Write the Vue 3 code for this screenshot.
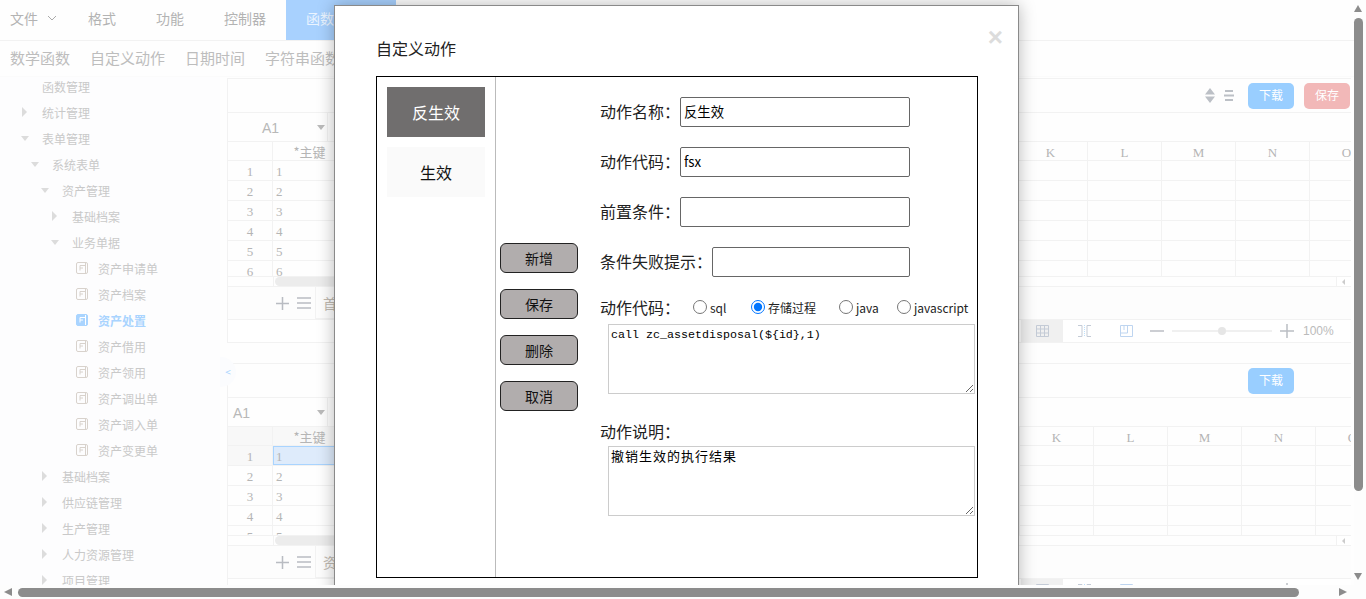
<script setup>
const tree = [
  { t: '函数管理', l: 0, k: 'none' }, { t: '统计管理', l: 0, k: 'closed' }, { t: '表单管理', l: 0, k: 'open' },
  { t: '系统表单', l: 1, k: 'open' }, { t: '资产管理', l: 2, k: 'open' }, { t: '基础档案', l: 3, k: 'closed' },
  { t: '业务单据', l: 3, k: 'open' }, { t: '资产申请单', l: 4, k: 'leaf' }, { t: '资产档案', l: 4, k: 'leaf' },
  { t: '资产处置', l: 4, k: 'leaf', on: true }, { t: '资产借用', l: 4, k: 'leaf' }, { t: '资产领用', l: 4, k: 'leaf' },
  { t: '资产调出单', l: 4, k: 'leaf' }, { t: '资产调入单', l: 4, k: 'leaf' }, { t: '资产变更单', l: 4, k: 'leaf' },
  { t: '基础档案', l: 2, k: 'closed' }, { t: '供应链管理', l: 2, k: 'closed' }, { t: '生产管理', l: 2, k: 'closed' },
  { t: '人力资源管理', l: 2, k: 'closed' }, { t: '项目管理', l: 2, k: 'closed' },
]
const cols = 'BCDEFGHIJKLMNO'.split('')
const panels = [
  { id: 1, save: true, nameLeft: false, tab: '首', colB: 75, rows: [1, 2, 3, 4, 5, 6], sel: false, gridH: 134, gap: 20 },
  { id: 2, save: false, nameLeft: true, tab: '资', colB: 81, rows: [1, 2, 3, 4, 5, 6], sel: true, gridH: 108, gap: 0 },
]
</script>

<template>
  <div class="window">
    <main class="page">
      <nav class="tabs">
        <a class="tab file">文件<svg class="chev" width="10" height="6" viewBox="0 0 10 6"><path d="M1 1l4 4 4-4" fill="none" stroke="#aaa"/></svg></a>
        <a class="tab">格式</a><a class="tab">功能</a><a class="tab">控制器</a>
        <a class="tab active">函数</a>
      </nav>
      <nav class="subtabs">
        <a>数学函数</a><a>自定义动作</a><a>日期时间</a><a>字符串函数</a>
      </nav>
      <div class="body">
        <aside class="sidebar">
          <div v-for="(n, i) in tree" :key="i" class="node" :class="{ on: n.on }" :style="{ paddingLeft: 22 + n.l * 10 + 'px' }">
            <i class="mark" :class="n.k"></i>
            <svg v-if="n.k === 'leaf'" class="leaf-ico" width="13" height="13" viewBox="0 0 13 13">
              <rect x=".5" y=".5" width="11" height="11" rx="1.5" :fill="n.on ? '#a9d4ff' : 'none'" :stroke="n.on ? '#a9d4ff' : '#d8d2cc'"/>
              <path d="M4 3.5h5M4 3.5v5M4 6h3M9.5 1v10" fill="none" :stroke="n.on ? '#fff' : '#d8d2cc'"/>
            </svg>
            <span>{{ n.t }}</span>
          </div>
        </aside>
        <section class="content">
          <button class="collapse">&lt;</button>
          <div v-for="p in panels" :key="p.id" class="panel" :style="{ marginBottom: p.gap + 'px' }">
            <div class="toolbar">
              <svg v-if="p.save" class="tool sort" width="10" height="15" viewBox="0 0 10 15"><path d="M5 0l5 6.500H0zM5 15l5-6.500H0z" fill="#bcc0c6"/></svg>
              <svg v-if="p.save" class="tool lines" width="10" height="11" viewBox="0 0 10 11"><path d="M1 1h8M0 5.500h10M1 10h8" stroke="#bcc0c6" stroke-width="2"/></svg>
              <button class="btn blue">下载</button>
              <button class="btn" :class="p.save ? 'red' : 'ghost'">{{ p.save ? '保存' : '' }}</button>
            </div>
            <div class="formula">
              <div class="cellname" :class="{ left: p.nameLeft }"><span>A1</span><i class="caret"></i></div>
            </div>
            <div class="grid" :style="{ height: p.gridH + 'px' }">
              <div class="row head">
                <div class="c idx" :class="{ shade: p.sel }"></div>
                <div class="c a" :class="{ shade: p.sel }">*主键</div>
                <div v-for="(c, ci) in cols" :key="c" class="c" :style="{ flexBasis: (ci === 0 ? p.colB : 74) + 'px' }">{{ c }}</div>
              </div>
              <div v-for="r in p.rows" :key="r" class="row">
                <div class="c idx" :class="{ shade: p.sel && r === 1 }">{{ r }}</div>
                <div class="c a val" :class="{ selected: p.sel && r === 1 }">{{ r }}</div>
                <div v-for="(c, ci) in cols" :key="c" class="c" :style="{ flexBasis: (ci === 0 ? p.colB : 74) + 'px' }"></div>
              </div>
            </div>
            <div class="hscroll">
              <div class="hs-spacer"></div><div class="hs-thumb"></div><div class="hs-arrow"><i></i></div>
            </div>
            <div class="sheets">
              <svg class="sheet-ico" width="13" height="13" viewBox="0 0 13 13"><path d="M0 6.500h13M6.500 0v13" stroke="#b9bcc2" stroke-width="1.500"/></svg>
              <svg class="sheet-ico" width="14" height="12" viewBox="0 0 14 12"><path d="M0 1h14M0 6h14M0 11h14" stroke="#b9bcc2" stroke-width="1.500"/></svg>
              <div class="sheet">{{ p.tab }}</div>
            </div>
            <div class="status">
              <div class="view cur"><svg width="13" height="12" viewBox="0 0 13 12"><path d="M.5.500h12v11H.5zM.5 4h12M.5 8h12M4.500.500v11M8.500.500v11" fill="none" stroke="#c4cbd6"/></svg></div>
              <div class="view"><svg width="13" height="12" viewBox="0 0 13 12"><path d="M0 .500h4v11H0M13 .500H9v11h4" fill="none" stroke="#c4cbd6"/><path d="M6.500 0v12" stroke="#bde0fb" stroke-dasharray="1 1"/></svg></div>
              <div class="view"><svg width="13" height="12" viewBox="0 0 13 12"><path d="M.5.500h12v11H.5zM.5 8h7V.500M4 .500V5" fill="none" stroke="#bed5f0"/></svg></div>
              <svg class="zm minus" width="14" height="2" viewBox="0 0 14 2"><path d="M0 1h14" stroke="#bbbec4" stroke-width="1.500"/></svg>
              <div class="slider"><i></i></div>
              <svg class="zm plus" width="14" height="14" viewBox="0 0 14 14"><path d="M0 7h14M7 0v14" stroke="#bbbec4" stroke-width="1.500"/></svg>
              <span class="pct">100%</span>
            </div>
          </div>
        </section>
      </div>

      <div class="modal">
        <span class="close">×</span>
        <h3 class="title">自定义动作</h3>
        <div class="box">
          <div class="actions">
            <div class="action cur">反生效</div>
            <div class="action">生效</div>
          </div>
          <div class="ops">
            <button>新增</button><button>保存</button><button>删除</button><button>取消</button>
          </div>
          <form class="form">
            <div class="field"><label>动作名称：</label><input value="反生效" /></div>
            <div class="field"><label>动作代码：</label><input value="fsx" /></div>
            <div class="field"><label>前置条件：</label><input value="" /></div>
            <div class="field"><label>条件失败提示：</label><input value="" /></div>
            <div class="types">
              <label class="lab">动作代码：</label>
              <div class="radios">
                <label><input type="radio" name="t" />sql</label>
                <label><input type="radio" name="t" checked />存储过程</label>
                <label><input type="radio" name="t" />java</label>
                <label><input type="radio" name="t" />javascript</label>
              </div>
            </div>
            <textarea class="code latin">call zc_assetdisposal(${id},1)</textarea>
            <label class="desc">动作说明：</label>
            <textarea class="code cjk">撤销生效的执行结果</textarea>
          </form>
        </div>
      </div>
    </main>

    <div class="vbar">
      <i class="arr up"></i><div class="vthumb"></div><i class="arr down"></i>
    </div>
    <div class="hbar">
      <i class="arr left"></i><div class="hthumb"></div><i class="arr right"></i>
    </div>
  </div>
</template>

<style>
html, body { margin: 0; overflow: hidden; background: #fff; }
</style>

<style scoped>
.window {
  display: grid;
  grid-template-columns: 1fr 12px;
  grid-template-rows: 585px 14px;
  height: 599px;
  width: 1366px;
  font-family: "Noto Sans CJK SC", "Noto Sans", sans-serif;
  background: #fefefe;
}
.page { position: relative; overflow: hidden; grid-column: 1; grid-row: 1; }

.tabs { display: flex; height: 40px; border-bottom: 1px solid #f2f2f2; font-size: 14px; color: #b3b3b3; }
.tab { line-height: 36px; padding: 0 20px; }
.tab.file { padding: 0 0 0 10px; width: 58px; display: flex; align-items: center; gap: 9px; height: 36px; }
.tab.active { background: #a8d1fe; color: #eaf4ff; width: 70px; padding: 0 20px; height: 40px; }

.subtabs { display: flex; gap: 20px; height: 35px; padding-left: 10px; font-size: 15px; line-height: 33px; color: #bdbdbd; border-bottom: 1px solid #fbfbfb; }

.body { display: flex; }
.sidebar { width: 220px; height: 508px; margin-right: 7px; background: #fdfdfe; overflow: hidden; font-size: 12px; color: #c9c9c9; flex: none; }
.node { height: 26px; display: flex; align-items: center; position: relative; top: -4px; }
.node .mark { width: 20px; flex: none; display: block; height: 0; }
.node .mark.closed { width: 0; height: 0; margin-right: 15px; border-left: 5px solid #dcdcdc; border-top: 5px solid transparent; border-bottom: 5px solid transparent; }
.node .mark.open { width: 0; height: 0; margin-right: 13px; margin-left: -1px; border-top: 5px solid #dcdcdc; border-left: 4px solid transparent; border-right: 4px solid transparent; }
.node .mark.leaf { width: 14px; }
.leaf-ico { flex: none; margin-right: 9px; }
.node.on { color: #a9d4ff; font-weight: 700; }

.content { flex: 1; position: relative; min-width: 0; padding-top: 1px; }
.collapse { position: absolute; left: -7px; top: 280px; width: 16px; height: 30px; padding: 0; border: 0; border-radius: 0 16px 16px 0; background: #fbfcfe; color: #a9d4ff; font-size: 10px; line-height: 30px; font-family: inherit; z-index: 1; }

.panel { width: 1124px; box-sizing: border-box; overflow: hidden; border-left: 1px solid #f2f2f2; }
.toolbar { border-top: 1px solid #f2f2f2; border-bottom: 1px solid #f2f2f2; padding: 4px 1px 0 0; box-sizing: border-box; height: 35px; display: flex; align-items: flex-start; justify-content: flex-end; gap: 10px; }
.tool.sort { margin-top: 5px; margin-right: -1px; }
.tool.lines { margin-top: 7px; margin-right: 4px; }
.btn { width: 46px; height: 26px; padding: 0 0 3px; border: 0; border-radius: 5px; color: #fff; font: 12px "Noto Sans CJK SC", sans-serif; }
.btn.blue { background: #99ceff; }
.btn.red { background: #f2b8b8; }
.btn.ghost { background: transparent; }
.formula { height: 28px; border-bottom: 1px solid #f2f2f2; display: flex; }
.cellname { width: 100px; border-right: 1px solid #f2f2f2; display: flex; align-items: center; justify-content: space-between; padding: 1px 2px 0 34px; box-sizing: border-box; font: 14px "Liberation Sans", sans-serif; color: #b8b8b8; }
.cellname.left { padding-left: 5px; }
.caret { border-top: 5px solid #bbb; border-left: 4px solid transparent; border-right: 4px solid transparent; }

.grid { overflow: hidden; font: 13px "Liberation Serif", "Noto Sans CJK SC", serif; color: #b5b5b5; }
.row { display: flex; height: 19px; border-bottom: 1px solid #f2f2f2; }
.row.head { height: 18px; }
.c { flex: 0 0 74px; box-sizing: border-box; border-right: 1px solid #f2f2f2; text-align: center; line-height: 21px; }
.c.idx { flex-basis: 45px; }
.c.a { font-family: "Noto Sans CJK SC", sans-serif; font-size: 13px; line-height: 19px; }
.c.val { font-family: "Liberation Serif", serif; text-align: left; padding-left: 3px; font-size: 13px; line-height: 21px; }
.shade { background: #f8f8f8; }
.selected { background: #deebfb; outline: 1px solid #a9d4ff; outline-offset: -1px; }

.hscroll { height: 9px; display: flex; border-top: 1px solid #f2f2f2; border-bottom: 1px solid #f2f2f2; position: relative; }
.hs-spacer { width: 45px; border-right: 1px solid #f2f2f2; }
.hs-thumb { width: 300px; background: #ececec; border-radius: 5px; flex: none; margin-left: 1px; }
.hs-arrow { position: absolute; right: 0; top: 0; bottom: 0; width: 15px; border-left: 1px solid #f2f2f2; background: #fff; display: flex; align-items: center; padding-left: 5px; box-sizing: border-box; }
.hs-arrow i { border-right: 3px solid #ccc; border-top: 3px solid transparent; border-bottom: 3px solid transparent; }

.sheets { height: 32px; border-bottom: 1px solid #f2f2f2; display: flex; align-items: center; gap: 8px; padding-left: 48px; background: #fdfdfd; }
.sheet-ico { flex: none; }
.sheet { align-self: stretch; margin-left: -4px; width: 70px; border: 1px solid #f2f2f2; border-top: 0; padding-left: 7px; font-size: 14px; line-height: 32px; color: #c0b9b0; }

.status { height: 22px; border-bottom: 1px solid #f2f2f2; display: flex; align-items: center; padding-left: 793px; background: #fff; }
.view { width: 42px; height: 22px; display: flex; align-items: center; justify-content: center; flex: none; }
.view.cur { background: #f0f0f0; }
.zm { flex: none; }
.minus { margin-left: 3px; }
.slider { width: 100px; height: 2px; margin: 0 8px; background: #f0f0f0; position: relative; flex: none; }
.slider i { position: absolute; left: 46px; top: -3px; width: 8px; height: 8px; background: #e6e6e6; border-radius: 50%; }
.pct { margin-left: 9px; font: 12px "Liberation Sans", sans-serif; color: #bbb; }

.modal { position: absolute; left: 334px; top: 5px; width: 685px; height: 700px; box-sizing: border-box; background: #fff; border: 1px solid #8a8a8a; box-shadow: 0 0 16px rgba(0, 0, 0, .28); padding: 31px 41px; color: #222; }
.close { position: absolute; right: 15px; top: 18px; font: 700 26px/26px "Liberation Sans", sans-serif; color: #dcdcdc; }
.title { margin: 0 0 16px; font-weight: 400; font-size: 16px; line-height: 23px; color: #222; }
.box { width: 602px; height: 502px; box-sizing: border-box; border: 1px solid #000; display: flex; }
.actions { width: 119px; box-sizing: border-box; border-right: 1px solid #bbb; padding: 10px 10px 0; display: flex; flex-direction: column; gap: 10px; flex: none; }
.action { height: 50px; line-height: 50px; text-align: center; font-size: 16px; background: #fafafa; color: #111; }
.action.cur { background: #706e6e; color: #fff; }
.ops { width: 78px; margin-left: 4px; padding-top: 166px; display: flex; flex-direction: column; gap: 16px; flex: none; }
.ops button { height: 30px; padding: 0 0 1px; background: #b1adad; border: 1px solid #222; border-radius: 6px; font: 14px "Noto Sans CJK SC", sans-serif; color: #111; }
.form { margin-left: 23px; padding-top: 20px; width: 376px; flex: none; display: flex; flex-direction: column; }
.field { width: 309px; height: 30px; margin-bottom: 20px; display: flex; align-items: center; font-size: 16px; color: #222; }
.field label { margin-left: -1px; flex: none; padding-bottom: 2px; }
.field input { flex: 1; min-width: 0; height: 30px; box-sizing: border-box; padding: 0 3px 2px; border: 1px solid #666; border-radius: 2px; font: 13.33px "Noto Sans CJK SC", sans-serif; color: #000; outline: 0; }
.types { display: flex; align-items: center; height: 24px; margin-top: -2px; font-size: 16px; }
.lab { flex: none; width: 92px; margin-left: -1px; margin-right: 1px; }
.radios { display: grid; grid-template-columns: 58px 88px 58px auto; font-size: 12px; }
.radios label { display: flex; align-items: center; gap: 3px; white-space: nowrap; }
.radios input { width: 14px; height: 14px; margin: 0; }
.code { display: block; flex: none; width: 367px; height: 70px; margin: 5px 0 0 7px; padding: 1px 2px; box-sizing: border-box; border: 1px solid #ccc; line-height: 16px; color: #000; outline: 0; }
.code.latin { font: 11.67px/18px "Liberation Mono", monospace; }
.code.cjk { font: 13px/16px "Noto Sans CJK SC", sans-serif; letter-spacing: 1px; }
.desc { font-size: 16px; margin: 25px 0 -2px -1px; line-height: 24px; color: #222; height: 24px; flex: none; }

.vbar { grid-column: 2; grid-row: 1; display: flex; flex-direction: column; align-items: flex-start; padding-top: 5px; background: #fdfdfd; box-sizing: border-box; height: 585px; }
.vthumb { width: 9px; height: 473px; margin-top: 6px; border-radius: 5px; background: #8c8c8c; }
.hbar { grid-column: 1 / 3; grid-row: 2; display: flex; align-items: center; padding-left: 4px; background: #fdfdfd; position: relative; }
.hthumb { width: 1281px; height: 9px; margin-left: 6px; border-radius: 5px; background: #8c8c8c; }
.arr { display: block; width: 0; height: 0; flex: none; }
.arr.up { border-bottom: 7px solid #8c8c8c; border-left: 4.500px solid transparent; border-right: 4.500px solid transparent; }
.arr.down { margin-top: auto; margin-bottom: 5px; border-top: 7px solid #8c8c8c; border-left: 4.500px solid transparent; border-right: 4.500px solid transparent; }
.arr.left { border-right: 8px solid #8c8c8c; border-top: 4.500px solid transparent; border-bottom: 4.500px solid transparent; }
.arr.right { margin-left: 40px; border-left: 8px solid #8c8c8c; border-top: 4.500px solid transparent; border-bottom: 4.500px solid transparent; }
</style>
